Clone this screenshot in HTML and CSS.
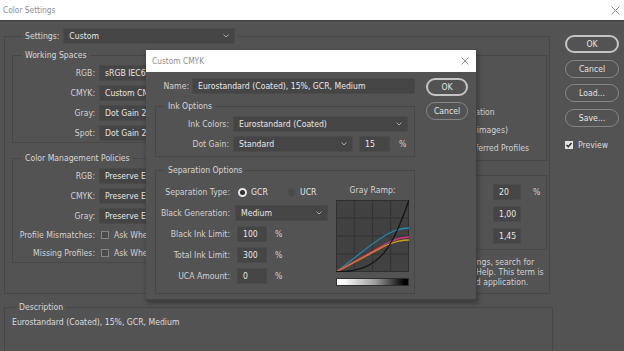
FILE: index.html
```html
<!DOCTYPE html>
<html lang="en">
<head>
  <meta charset="UTF-8">
  <title>Color Settings</title>
  <link rel="stylesheet" href="styles.css">
</head>
<body>

  <div class="titlebar">
    <span class="title">Color Settings</span>
    <svg class="close" width="9" height="9" viewBox="0 0 9 9"><path d="M0.5 0.5L8.5 8.5M8.5 0.5L0.5 8.5"/></svg>
  </div>

  <div class="window">
    <div class="content">
      <fieldset class="panel main-panel">
        <legend class="settings">
          <span class="lbl">Settings:</span>
          <div class="select settings-select">Custom<svg class="chev" width="6" height="4" viewBox="0 0 6 4"><path d="M0.5 0.5L3 3L5.5 0.5"/></svg></div>
        </legend>

        <div class="columns">
          <div class="col-left">
            <fieldset class="group ws">
              <legend>Working Spaces</legend>
              <div class="form">
                <label>RGB:</label><div class="select">sRGB IEC61966-2.1</div>
                <label>CMYK:</label><div class="select">Custom CMYK...</div>
                <label>Gray:</label><div class="select">Dot Gain 20%</div>
                <label>Spot:</label><div class="select">Dot Gain 20%</div>
              </div>
            </fieldset>

            <fieldset class="group cmp">
              <legend>Color Management Policies</legend>
              <div class="form">
                <label>RGB:</label><div class="select">Preserve Embedded Profiles</div>
                <label>CMYK:</label><div class="select">Preserve Embedded Profiles</div>
                <label>Gray:</label><div class="select">Preserve Embedded Profiles</div>
                <label>Profile Mismatches:</label>
                <div class="checks"><span class="check"></span>Ask When Opening</div>
                <label>Missing Profiles:</label>
                <div class="checks"><span class="check"></span>Ask When Opening</div>
              </div>
            </fieldset>
          </div>

          <div class="col-right">
            <fieldset class="group conv">
              <legend>Conversion Options</legend>
              <div class="conv-form">
                <label>Engine:</label><div class="select">Adobe (ACE)</div>
                <label>Intent:</label><div class="select">Relative Colorimetric</div>
              </div>
              <div class="conv-checks">
                <div class="checks"><span class="check on"></span>Use Black Point Compensation</div>
                <div class="checks"><span class="check on"></span>Use Dither (8-bit/channel images)</div>
                <div class="checks"><span class="check"></span>Compensate for Scene-referred Profiles</div>
              </div>
            </fieldset>

            <fieldset class="group adv">
              <legend>Advanced Controls</legend>
              <div class="adv-form">
                <div class="checks"><span class="check"></span>Desaturate Monitor Colors By:</div>
                <div class="field">20</div><span class="unit">%</span>
                <div class="checks"><span class="check"></span>Blend RGB Colors Using Gamma:</div>
                <div class="field">1,00</div><span class="unit"></span>
                <div class="checks"><span class="check"></span>Blend Text Colors Using Gamma:</div>
                <div class="field">1,45</div><span class="unit"></span>
              </div>
            </fieldset>

            <p class="hint">For more information on color settings, search for<br>"setting up color management" in Help. This term is<br>searchable from any Creative Cloud application.</p>
          </div>
        </div>
      </fieldset>

      <fieldset class="panel desc">
        <legend>Description</legend>
        <p>Eurostandard (Coated), 15%, GCR, Medium</p>
      </fieldset>
    </div>

    <div class="side">
      <button class="btn primary">OK</button>
      <button class="btn">Cancel</button>
      <button class="btn">Load...</button>
      <button class="btn">Save...</button>
      <div class="preview">
        <span class="check on"><svg width="8" height="8" viewBox="0 0 8 8"><path d="M1.5 4L3.3 5.8L6.5 2"/></svg></span>Preview
      </div>
    </div>
  </div>

  <div class="dialog">
    <div class="dialog-title">
      <span>Custom CMYK</span>
      <svg class="close" width="8" height="8" viewBox="0 0 8 8"><path d="M0.5 0.5L7.5 7.5M7.5 0.5L0.5 7.5"/></svg>
    </div>
    <div class="dialog-body">
      <div class="dialog-main">
        <div class="name-row">
          <label>Name:</label>
          <div class="field name-field">Eurostandard (Coated), 15%, GCR, Medium</div>
        </div>

        <fieldset class="group ink">
          <legend>Ink Options</legend>
          <div class="ink-form">
            <label>Ink Colors:</label>
            <div class="select">Eurostandard (Coated)<svg class="chev" width="6" height="4" viewBox="0 0 6 4"><path d="M0.5 0.5L3 3L5.5 0.5"/></svg></div>
            <label>Dot Gain:</label>
            <div class="gain">
              <div class="select gain-select">Standard<svg class="chev" width="6" height="4" viewBox="0 0 6 4"><path d="M0.5 0.5L3 3L5.5 0.5"/></svg></div>
              <div class="field gain-field">15</div>
              <span class="unit">%</span>
            </div>
          </div>
        </fieldset>

        <fieldset class="group sep">
          <legend>Separation Options</legend>
          <div class="sep-inner">
            <div class="sep-form">
              <label>Separation Type:</label>
              <div class="radios">
                <span class="radio-opt"><span class="radio on"></span>GCR</span>
                <span class="radio-opt"><span class="radio"></span>UCR</span>
              </div>
              <label>Black Generation:</label>
              <div class="select bg-select">Medium<svg class="chev" width="6" height="4" viewBox="0 0 6 4"><path d="M0.5 0.5L3 3L5.5 0.5"/></svg></div>
              <label>Black Ink Limit:</label>
              <div class="pct"><div class="field num">100</div><span class="unit">%</span></div>
              <label>Total Ink Limit:</label>
              <div class="pct"><div class="field num">300</div><span class="unit">%</span></div>
              <label>UCA Amount:</label>
              <div class="pct"><div class="field num">0</div><span class="unit">%</span></div>
            </div>

            <div class="ramp">
              <span class="ramp-label">Gray Ramp:</span>
              <svg class="ramp-graph" width="73" height="72" viewBox="0 0 72 72" preserveAspectRatio="none">
                <rect x="0.5" y="0.5" width="71" height="71" fill="#414141" stroke="#2f2f2f"/>
                <path d="M18 0V72M36 0V72M54 0V72M0 18H72M0 36H72M0 54H72" stroke="#333" stroke-width="1"/>
                <path d="M0 72C22 56 40 38 57 31C64 28.5 68 28 72 28" stroke="#1c8bb5" stroke-width="1.3" fill="none"/>
                <path d="M0 72L49 45.5C59 41 65 40 72 40" stroke="#c9a21e" stroke-width="1.3" fill="none"/>
                <path d="M0 72L49 44C59 38.5 65 37 72 37" stroke="#d2337a" stroke-width="1.3" fill="none"/>
                <path d="M0 72L48 45.5" stroke="#e7652d" stroke-width="1.2" fill="none"/>
                <path d="M0 71.5C25 72 40 64 51 48C58 37 66 18 72 0" stroke="#121212" stroke-width="1.2" fill="none"/>
              </svg>
              <div class="ramp-bar"></div>
            </div>
          </div>
        </fieldset>
      </div>

      <div class="dialog-buttons">
        <button class="btn primary">OK</button>
        <button class="btn">Cancel</button>
      </div>
    </div>
  </div>

</body>
</html>
```

FILE: styles.css
```css
* {
  box-sizing: border-box;
}

body {
  margin: 0;
  width: 624px;
  height: 351px;
  overflow: hidden;
  background: #535353;
  color: #d2d2d2;
  font-family: "DejaVu Sans Condensed", "Liberation Sans", sans-serif;
  font-size: 8.6px;
  line-height: 12px;
}

p {
  margin: 0;
}

label {
  white-space: nowrap;
}

svg path {
  fill: none;
}

/* title bar */
.titlebar {
  height: 21px;
  background: #fff;
  display: flex;
  align-items: center;
  justify-content: space-between;
  padding: 0 4px 0 3px;
  border-bottom: 1px solid #3f3f3f;
}

.title {
  color: #8e8e8e;
  font-size: 8.3px;
}

.close path {
  stroke: #8a8a8a;
  stroke-width: 1;
}

.window {
  display: flex;
}

.content {
  width: 549px;
  margin-left: 4px;
  padding-top: 7px;
}

/* group boxes */
fieldset {
  margin: 0;
  min-width: 0;
  border: 1px solid #474747;
}

legend {
  padding: 0 3px;
  margin-left: 3px;
  line-height: 12px;
  color: #d8d8d8;
}

.main-panel {
  width: 546px;
  padding: 5px 2px 6px 7px;
}

.settings {
  margin-left: 10px;
  display: flex;
  align-items: center;
  gap: 4px;
  line-height: 16px;
}

.settings-select {
  width: 172px;
}

.columns {
  display: flex;
  gap: 8px;
}

.col-left {
  width: 288px;
}

.col-right {
  width: 239px;
}

.group {
  padding: 4px 6px 1px 6px;
}

.ws,
.cmp {
  padding-left: 1px;
}

.ws legend,
.cmp legend {
  margin-left: 8px;
}

.cmp {
  margin-top: 9px;
  padding-bottom: 2px;
}

.form {
  display: grid;
  grid-template-columns: 81px 180px;
  column-gap: 4px;
  row-gap: 4px;
  align-items: center;
}

.form label,
.conv-form label,
.ink-form label,
.sep-form label,
.name-row label {
  text-align: right;
  justify-self: end;
}

/* controls */
.select,
.field {
  height: 16px;
  background: #454545;
  border: 1px solid #4b4b4b;
  color: #e8e8e8;
  display: flex;
  align-items: center;
  padding: 0 5px;
  white-space: nowrap;
  overflow: hidden;
}

.chev {
  margin-left: auto;
  flex: none;
}

.chev path {
  stroke: #a8a8a8;
  stroke-width: 1;
}

.checks {
  display: flex;
  align-items: center;
  height: 14px;
  white-space: nowrap;
}

.check {
  width: 8px;
  height: 8px;
  border: 1px solid #858585;
  background: #4a4a4a;
  margin: 0 5px 0 2px;
  flex: none;
  display: inline-flex;
}

.check.on {
  background: #e2e2e2;
  border-color: #e2e2e2;
}

.check.on path {
  stroke: #2a2a2a;
  stroke-width: 1.4;
}

.check.on svg {
  margin: -1px;
}

/* right column */
.conv {
  padding: 4px 5px 5px 7px;
}

.conv-form {
  display: grid;
  grid-template-columns: 46px 104px;
  column-gap: 4px;
  row-gap: 4px;
  align-items: center;
}

.conv-checks {
  display: flex;
  flex-direction: column;
  gap: 4px;
  margin-top: 4px;
  padding-left: 46px;
}

.adv {
  margin-top: 8px;
  padding: 3px 5px 5px 7px;
}

.adv-form {
  display: grid;
  grid-template-columns: 1fr 28px 8px;
  column-gap: 12px;
  row-gap: 6px;
  align-items: center;
}

.adv-form .checks {
  height: 16px;
}

.unit {
  color: #d2d2d2;
}

.hint {
  margin: 7px 0 0 34px;
  line-height: 10px;
  white-space: nowrap;
}

/* description */
.desc {
  width: 549px;
  margin-top: 7px;
  height: 52px;
  padding: 4px 2px 0 7px;
  border-bottom-width: 0;
}

.desc legend {
  margin-left: 4px;
}

.desc p {
  line-height: 10px;
  color: #dcdcdc;
}

/* side buttons */
.side {
  width: 54px;
  margin-left: 12px;
  padding-top: 14px;
  display: flex;
  flex-direction: column;
  gap: 6.5px;
}

.btn {
  height: 18px;
  width: 100%;
  padding: 0;
  border: 1.5px solid #858585;
  border-radius: 9px;
  background: transparent;
  color: #e4e4e4;
  font-family: inherit;
  font-size: 8.6px;
}

.btn.primary {
  border: 2px solid #c4c4c4;
}

.preview {
  display: flex;
  align-items: center;
  margin-top: 6px;
  color: #dcdcdc;
}

.preview .check {
  margin: 0 5px 0 0;
}

/* custom cmyk dialog */
.dialog {
  position: absolute;
  left: 146px;
  top: 50px;
  width: 331px;
  height: 251px;
  background: #535353;
  border-right: 1px solid #404040;
  border-bottom: 2px solid #424242;
  box-shadow: 1px 2px 5px rgba(0, 0, 0, 0.35);
}

.dialog-title {
  height: 22px;
  background: #fff;
  display: flex;
  align-items: center;
  justify-content: space-between;
  padding: 0 7px 0 6px;
  color: #8e8e8e;
  font-size: 8.3px;
}

.dialog-body {
  display: flex;
  gap: 11px;
  padding: 6px 0 0 9px;
}

.dialog-main {
  width: 260px;
}

.name-row {
  display: flex;
  justify-content: flex-end;
  align-items: center;
  gap: 3px;
}

.name-field {
  width: 223px;
}

.ink {
  margin-top: 6px;
  padding: 4px 6px 4px 6px;
}

.ink-form {
  display: grid;
  grid-template-columns: 67px 1fr;
  column-gap: 4px;
  row-gap: 4px;
  align-items: center;
}

.gain {
  display: flex;
  align-items: center;
}

.gain-select {
  width: 120px;
}

.gain-field {
  width: 31px;
  margin-left: 6px;
}

.gain .unit {
  margin-left: 9px;
}

.sep {
  margin-top: 7px;
  padding: 8px 6px 7px 2px;
}

.sep legend {
  margin-left: 7px;
}

.sep-inner {
  display: flex;
  justify-content: space-between;
}

.sep-form {
  display: grid;
  grid-template-columns: 72px auto;
  column-gap: 5px;
  row-gap: 5px;
  align-items: center;
  align-content: start;
}

.sep-form > * {
  height: 16px;
  line-height: 16px;
}

.radios {
  display: flex;
  align-items: center;
}

.radio-opt {
  width: 49px;
  display: flex;
  align-items: center;
  gap: 4px;
  color: #e6e6e6;
}

.radio-opt:first-child {
  margin-left: 3px;
}

.radio {
  width: 9px;
  height: 9px;
  border-radius: 50%;
  background: #4a4a4a;
  border: 1px solid #4f4f4f;
}

.radio.on {
  background: #2e2e2e;
  border: 2.5px solid #e6e6e6;
}

.bg-select {
  width: 93px;
}

.pct {
  display: flex;
  align-items: center;
}

.num {
  width: 30px;
  margin-left: 2px;
}

.pct .unit {
  margin-left: 8px;
}

.ramp {
  width: 73px;
  display: flex;
  flex-direction: column;
  align-items: center;
}

.ramp-label {
  margin-top: 0;
}

.ramp-graph {
  margin-top: 4px;
  display: block;
}

.ramp-bar {
  width: 73px;
  height: 8px;
  margin-top: 6px;
  border: 1px solid #2f2f2f;
  background: linear-gradient(90deg, #fff 8%, #9a9a9a 55%, #000 95%);
}

.dialog-buttons {
  width: 42px;
  display: flex;
  flex-direction: column;
  gap: 6px;
}
```
